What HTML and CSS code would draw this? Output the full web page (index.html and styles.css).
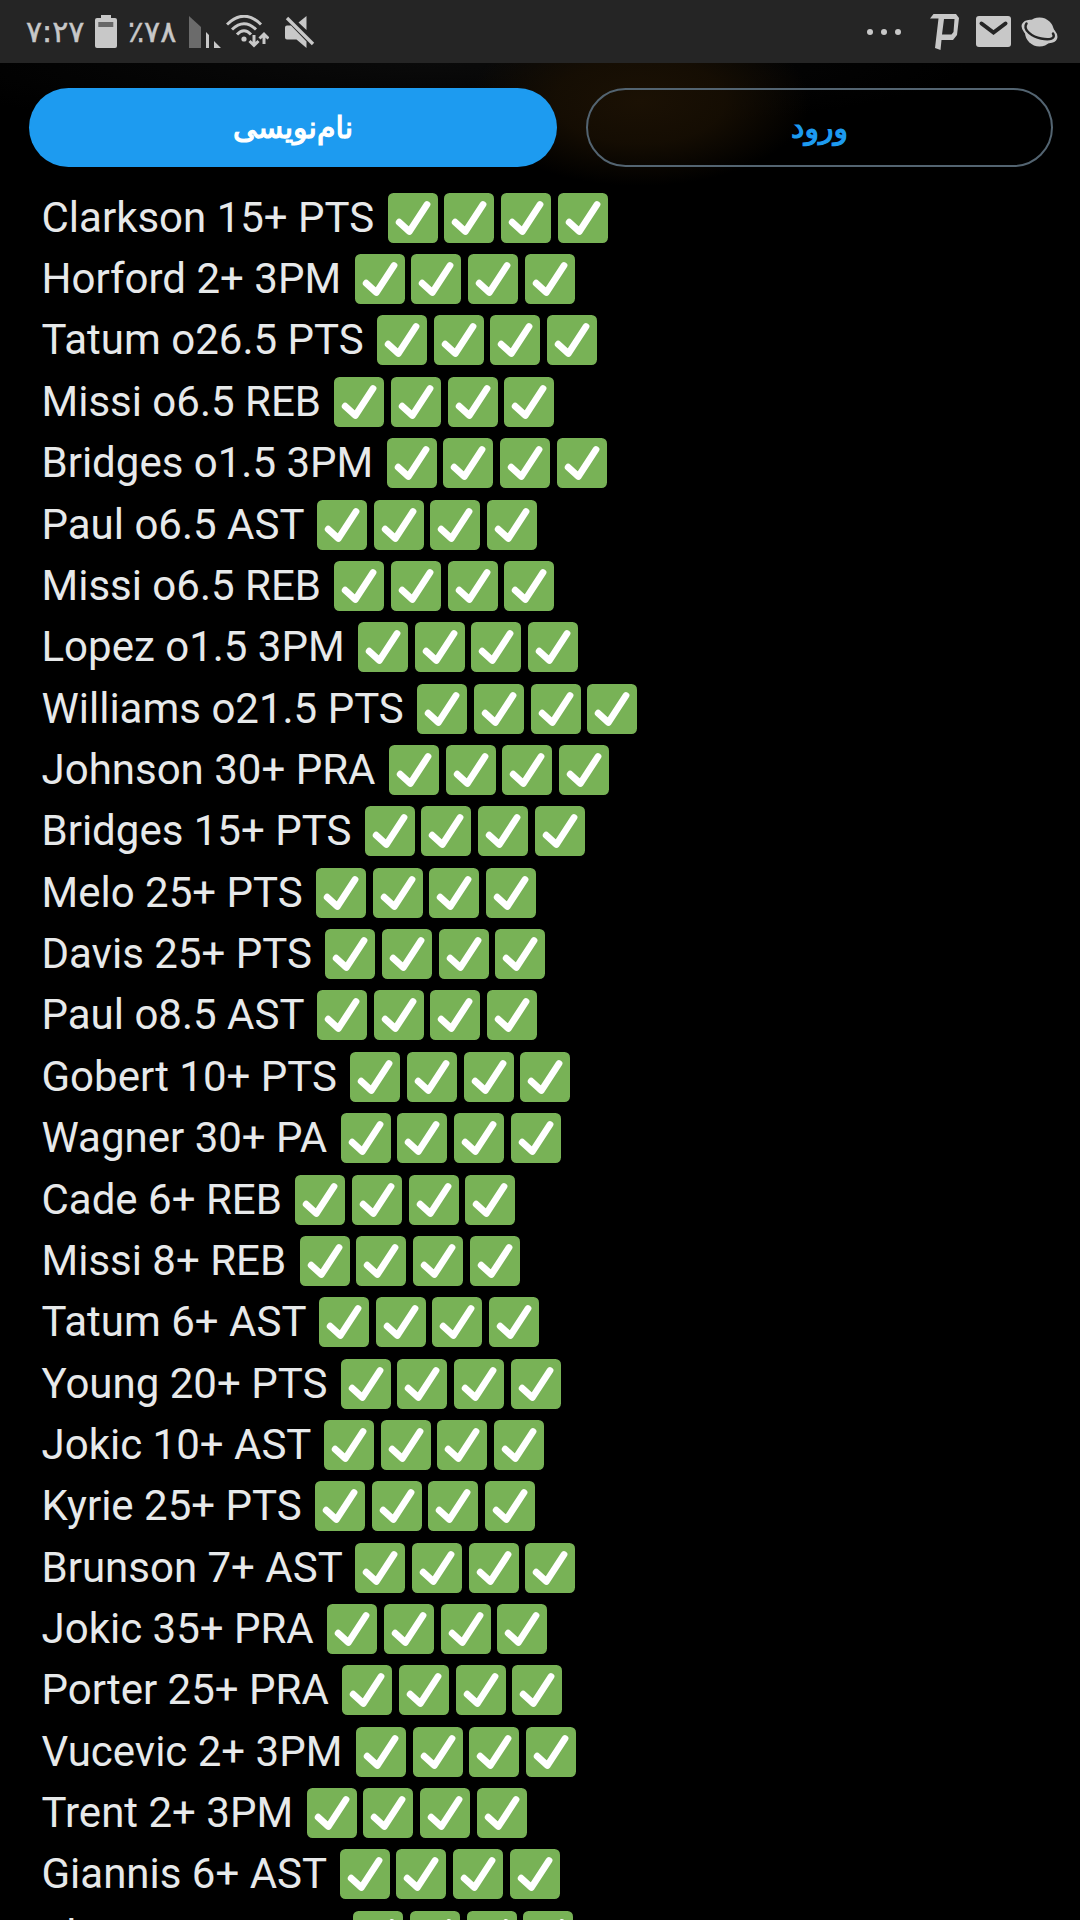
FILE: index.html
```html
<!DOCTYPE html>
<html lang="fa">
<head>
    <meta charset="UTF-8">
    <meta name="viewport" content="width=device-width, initial-scale=1.0">
    <title>Picks</title>
    <link rel="stylesheet" href="styles.css">
</head>

<body>
    <header class="status">
        <div class="status-left">
            <span class="clock">۷:۲۷</span>
            <svg class="battery" width="22" height="33" viewBox="0 0 22 33"><path fill="#c8c8c8" d="M6 0h10v3h4a2 2 0 0 1 2 2v26a2 2 0 0 1-2 2H2a2 2 0 0 1-2-2V5a2 2 0 0 1 2-2h4z"/><path fill="#686868" d="M3.300 7h15v5h-15z"/></svg>
            <span class="percent"><bdo dir="ltr">٪۷۸</bdo></span>
            <svg class="signal" width="32" height="32" viewBox="0 0 32 32"><path fill="#6b6b6b" d="M0 0l12 11v21H0z"/><path fill="#c8c8c8" d="M17 16l3 3v13h-3zM25 25l7 7h-7z"/></svg>
            <svg class="wifi" width="43" height="33" viewBox="0 0 43 33"><g fill="none" stroke="#c8c8c8" stroke-width="3"><path d="M1 9.500Q18-7 35 9.500"/><path d="M6 14.500Q18 3 30 14.500"/><path d="M11 19.500Q18 12 25 19.500"/><path d="M28 20v10M23.500 26l4.500 4.500 4.500-4.500M38 29V19M33.500 23.500L38 19l4.500 4.500"/></g><circle cx="18" cy="24" r="2.600" fill="#c8c8c8"/></svg>
            <svg class="mute" width="30" height="32" viewBox="0 0 30 32"><path fill="#c8c8c8" d="M21.500 0v14l-8-7.500zM2 9.500h4l15.500 16V32l-10-8.500H2a2 2 0 0 1-2-2v-10a2 2 0 0 1 2-2z"/><path stroke="#c8c8c8" stroke-width="3.400" d="M2 2l26 26"/></svg>
        </div>
        <div class="status-right">
            <svg class="dots" width="36" height="6" viewBox="0 0 36 6"><g fill="#c8c8c8"><circle cx="3" cy="3" r="3"/><circle cx="17" cy="3" r="3"/><circle cx="31" cy="3" r="3"/></g></svg>
            <svg class="psiphon" width="30" height="36" viewBox="0 0 30 36"><path fill="#c8c8c8" fill-rule="evenodd" d="M3.500 0H26l3 4-2 17-4 5H11.500l-1 10L5 34 8.500 4.500H0zM14 5l-2 15.500h9.500L23.500 18l1-13z"/></svg>
            <svg class="mail" width="35" height="31" viewBox="0 0 35 31"><rect width="35" height="31" rx="3" fill="#c8c8c8"/><path fill="none" stroke="#252525" stroke-width="4" stroke-linecap="round" d="M5.500 7.500l12 9 12-9"/></svg>
            <svg class="planet" width="38" height="30" viewBox="0 0 38 30"><circle cx="18.500" cy="15" r="14.500" fill="#c8c8c8"/><ellipse cx="18.500" cy="14.500" rx="19" ry="10" transform="rotate(23 18.500 14.500)" fill="#c8c8c8"/><path fill="none" stroke="#252525" stroke-width="2.500" stroke-linecap="round" d="M5.500 6.500C1 13 12 20 20 21.500c9 2 15 0 12-5"/></svg>
        </div>
    </header>

    <nav class="actions">
        <a class="btn signup">نام‌نویسی</a>
        <a class="btn login">ورود</a>
    </nav>

    <svg class="sprite" width="0" height="0">
        <symbol id="check" viewBox="0 0 50 50">
            <rect width="50" height="50" rx="5.500" fill="#78b256"/>
            <path fill="none" stroke="#fff" stroke-width="6.800" stroke-linecap="round" stroke-linejoin="round" d="M11.200 29.200l10.200 9.300L39 11.500"/>
        </symbol>
    </svg>
    <main class="picks" id="picks" dir="ltr"></main>

    <script src="script.js"></script>
</body>
</html>
```
FILE: styles.css
```css
* {
    box-sizing: border-box;
}
html {
    background-color: #000;
}
body {
    margin: 0;
    height: 1920px;
    overflow: hidden;
    background-color: #000;
    font-family: Roboto, 'Noto Sans', sans-serif;
}
.status {
    display: flex;
    justify-content: space-between;
    height: 63px;
    background-color: #252525;
    color: #c8c8c8;
    padding: 0 21px 0 26px;
}
.status-left, .status-right {
    display: flex;
    align-items: center;
}
.clock, .percent {
    font-family: 'DejaVu Sans', sans-serif;
    font-size: 30px;
    line-height: 62px;
    white-space: nowrap;
    -webkit-text-stroke: 0.5px #c8c8c8;
}
.clock {
    width: 69px;
}
.percent {
    width: 61px;
    margin-left: 11px;
}
.psiphon {
    margin-left: 27px;
}
.mail {
    margin-left: 16px;
}
.planet {
    margin-left: 10px;
}
.wifi {
    margin-left: 5px;
}
.mute {
    margin-left: 16px;
}
.actions {
    display: flex;
    gap: 29px;
    height: 123.6px;
    padding: 25px 27px 0 29px;
    background: radial-gradient(ellipse 170px 85px at 640px 38px, #1b1104, rgba(24, 15, 3, 0.85) 50%, transparent), radial-gradient(ellipse 540px 70px at 430px 0, #0a0a0a, transparent);
}
.btn {
    display: flex;
    align-items: center;
    justify-content: center;
    height: 79px;
    border-radius: 40px;
    font-family: 'DejaVu Sans', sans-serif;
    font-size: 30px;
    -webkit-text-stroke: 1.2px currentColor;
}
.signup {
    width: 528px;
    background-color: #1d9bf0;
    color: #fff;
}
.login {
    width: 467px;
    border: 2px solid #536471;
    color: #1d9bf0;
}
.sprite {
    display: block;
}
.pick {
    display: flex;
    align-items: center;
    height: 61.37px;
    padding-left: 41.5px;
    font-size: 42px;
    color: #e7e9ea;
    white-space: pre;
}
.checks {
    display: flex;
    gap: 6.7px;
    margin-left: 3px;
    padding-top: 1px;
}
.checks svg {
    width: 50px;
    height: 50px;
}
```
FILE: script.js
```js
const picks = [
    "Clarkson 15+ PTS", "Horford 2+ 3PM", "Tatum o26.5 PTS", "Missi o6.5 REB",
    "Bridges o1.5 3PM", "Paul o6.5 AST", "Missi o6.5 REB", "Lopez o1.5 3PM",
    "Williams o21.5 PTS", "Johnson 30+ PRA", "Bridges 15+ PTS", "Melo 25+ PTS",
    "Davis 25+ PTS", "Paul o8.5 AST", "Gobert 10+ PTS", "Wagner 30+ PA",
    "Cade 6+ REB", "Missi 8+ REB", "Tatum 6+ AST", "Young 20+ PTS",
    "Jokic 10+ AST", "Kyrie 25+ PTS", "Brunson 7+ AST", "Jokic 35+ PRA",
    "Porter 25+ PRA", "Vucevic 2+ 3PM", "Trent 2+ 3PM", "Giannis 6+ AST",
    "Thomas 6+ AST"
];
const check = '<svg><use href="#check"></use></svg>';

document.getElementById("picks").innerHTML = picks.map(pick =>
    '<div class="pick"><span>' + pick + ' </span><span class="checks">' + check.repeat(4) + '</span></div>'
).join("");
```
